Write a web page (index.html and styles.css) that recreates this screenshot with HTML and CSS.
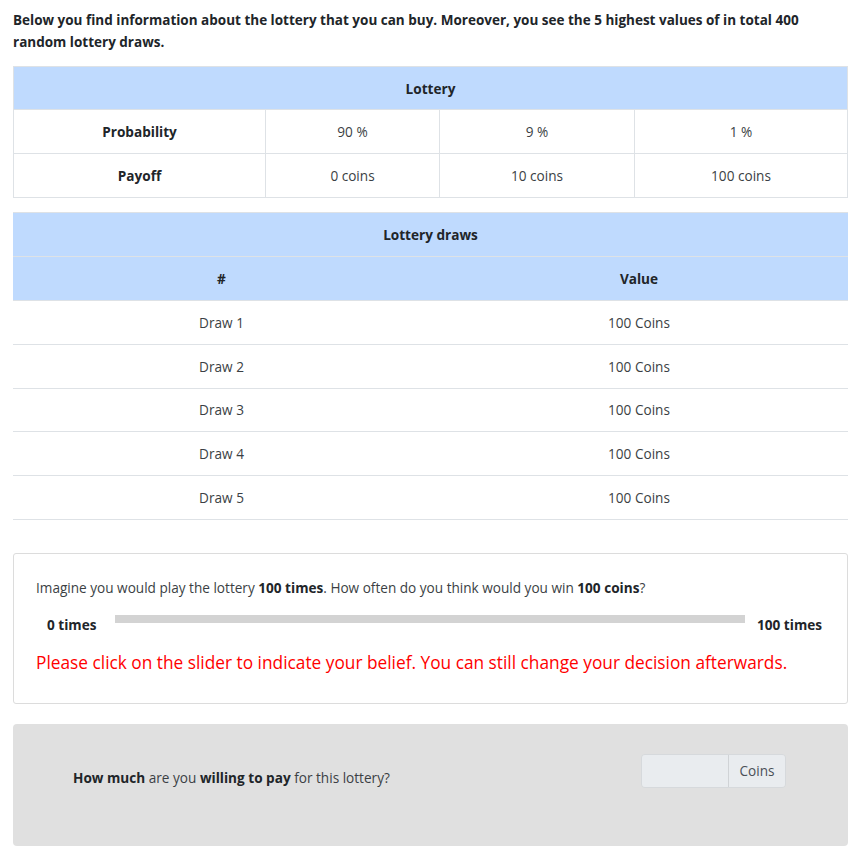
FILE: index.html
```html
<!DOCTYPE html>
<html>
<head>
<meta charset="utf-8">
<link rel="stylesheet" href="styles.css">
</head>
<body>
<div class="page">
  <p class="intro">Below you find information about the lottery that you can buy. Moreover, you see the 5 highest values of in total 400 random lottery draws.</p>

  <table class="tbl lottery">
    <thead>
      <tr><th colspan="4">Lottery</th></tr>
    </thead>
    <tbody>
      <tr><th class="c1">Probability</th><td class="c2">90 %</td><td class="c3">9 %</td><td>1 %</td></tr>
      <tr><th class="c1">Payoff</th><td class="c2">0 coins</td><td class="c3">10 coins</td><td>100 coins</td></tr>
    </tbody>
  </table>

  <table class="tbl draws">
    <thead>
      <tr><th colspan="2">Lottery draws</th></tr>
      <tr><th class="half">#</th><th>Value</th></tr>
    </thead>
    <tbody>
      <tr><td>Draw 1</td><td>100 Coins</td></tr>
      <tr><td>Draw 2</td><td>100 Coins</td></tr>
      <tr><td>Draw 3</td><td>100 Coins</td></tr>
      <tr><td>Draw 4</td><td>100 Coins</td></tr>
      <tr><td>Draw 5</td><td>100 Coins</td></tr>
    </tbody>
  </table>

  <div class="card">
    <p class="question">Imagine you would play the lottery <b>100 times</b>. How often do you think would you win <b>100 coins</b>?</p>
    <div class="slider-row">
      <span class="lbl left">0 times</span>
      <div class="track"></div>
      <span class="lbl right">100 times</span>
    </div>
    <p class="warn">Please click on the slider to indicate your belief. You can still change your decision afterwards.</p>
  </div>

  <div class="pay">
    <p class="pay-q"><b>How much</b> are you <b>willing to pay</b> for this lottery?</p>
    <div class="input-group">
      <div class="field"></div>
      <span class="addon">Coins</span>
    </div>
  </div>
</div>
</body>
</html>
```

FILE: styles.css
```css
* { box-sizing: border-box; }
html, body { margin: 0; padding: 0; background: #fff; }
body {
  font-family: "Open Sans", "Noto Sans", sans-serif;
  font-size: 13.6px;
  color: #212529;
}
.page { padding: 9px 13px 8px 13px; }
.intro {
  margin: 0 0 13px 0;
  font-weight: 700;
  font-size: 13.5px;
  line-height: 22px;
  color: #212529;
}
.tbl {
  width: 100%;
  border-collapse: collapse;
  margin-bottom: 14px;
}
.tbl th, .tbl td {
  text-align: center;
  vertical-align: middle;
  height: 44px;
  padding: 0 10px;
  border: 1px solid #dee2e6;
}
.tbl thead th { background: #bfdafe; font-weight: 700; border-color: #dee2e6; }
.lottery thead th { height: 43px; }
.draws tbody td { height: 43.8px; }
.tbl td { color: #3b3f44; }
.lottery .c1 { width: 252px; }
.lottery .c2 { width: 174px; }
.lottery .c3 { width: 195px; }
.draws th, .draws td { border-left: none; border-right: none; }
.draws .half { width: 417px; }
.draws { margin-bottom: 33px; }
.card {
  border: 1px solid #dcdcdc;
  border-radius: 3px;
  padding: 23px 22px 27px 22px;
  margin-bottom: 20px;
}
.question { margin: 0 0 16px 0; line-height: 22px; color: #3b3f44; }
.question b { color: #212529; }
.slider-row {
  display: flex;
  align-items: flex-start;
  height: 22px;
}
.lbl { font-weight: 700; line-height: 20px; }
.lbl.left { width: 79px; padding-left: 11px; }
.track {
  flex: 0 0 630px;
  height: 8px;
  background: #d3d3d3;
}
.lbl.right { padding-left: 12px; }
.warn {
  margin: 13px 0 0 0;
  color: #ff0000;
  font-size: 17.3px;
  line-height: 26px;
}
.pay {
  background: #e0e0e0;
  border-radius: 4px;
  height: 122px;
  display: flex;
  align-items: flex-start;
  padding: 30px 62px 0 60px;
  justify-content: space-between;
}
.pay-q { margin: 13px 0 0 0; line-height: 22px; color: #3b3f44; }
.pay-q b { color: #212529; }
.input-group {
  display: flex;
  height: 34px;
  border: 1px solid #d6d9dc;
  border-radius: 4px;
  overflow: hidden;
}
.field { width: 87px; background: #e9ecef; border-right: 1px solid #d0d3d6; }
.addon {
  width: 56px;
  background: #e9ecef;
  display: flex;
  align-items: center;
  justify-content: center;
  color: #495057;
  font-size: 13.6px;
}
```
